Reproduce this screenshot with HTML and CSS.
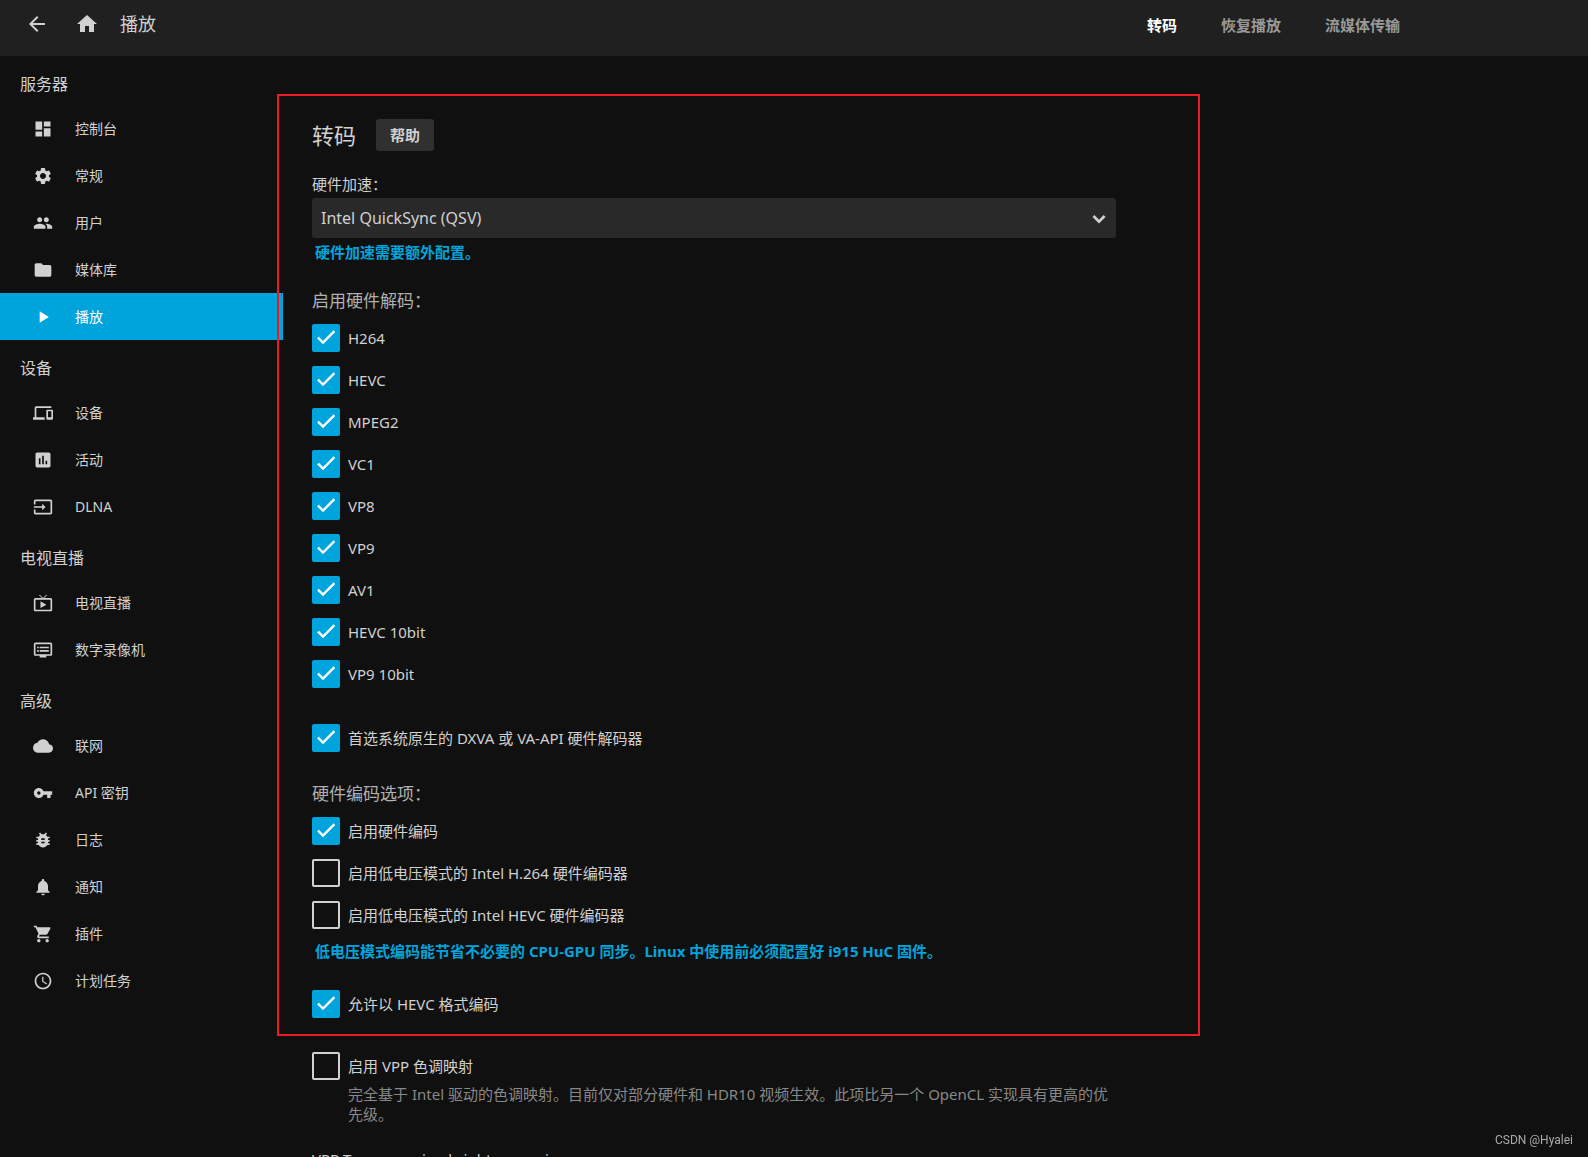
FILE: index.html
```html
<!DOCTYPE html>
<html lang="zh-CN">
<head>
<meta charset="utf-8">
<meta name="viewport" content="width=device-width, initial-scale=1">
<title>播放</title>
<link rel="stylesheet" href="styles.css">
</head>
<body>
<header class="topbar">
  <button class="icon-button" type="button" aria-label="返回"><svg viewBox="0 0 24 24"><path d="M20 11H7.83l5.59-5.59L12 4l-8 8 8 8 1.41-1.41L7.83 13H20v-2z"/></svg></button>
  <button class="icon-button" type="button" aria-label="主页"><svg viewBox="0 0 24 24"><path d="M10 20v-6h4v6h5v-8h3L12 3 2 12h3v8z"/></svg></button>
  <h1 class="page-title">播放</h1>
  <nav class="tabs" aria-label="播放设置">
    <a class="tab tab-active" href="#transcoding">转码</a>
    <a class="tab" href="#resume">恢复播放</a>
    <a class="tab" href="#streaming">流媒体传输</a>
  </nav>
</header>
<div class="layout">
  <nav class="sidebar" aria-label="控制台">
    <h2 class="nav-heading">服务器</h2>
    <ul class="nav-list">
      <li><a class="nav-link" href="#dashboard"><svg viewBox="0 0 24 24"><path d="M3 13h8V3H3v10zm0 8h8v-6H3v6zm10 0h8V11h-8v10zm0-18v6h8V3h-8z"/></svg>控制台</a></li>
      <li><a class="nav-link" href="#general"><svg viewBox="0 0 24 24"><path d="M19.14 12.94c.04-.3.06-.61.06-.94 0-.32-.02-.64-.07-.94l2.03-1.58c.18-.14.23-.41.12-.61l-1.92-3.32c-.12-.22-.37-.29-.59-.22l-2.39.96c-.5-.38-1.03-.7-1.62-.94l-.36-2.54c-.04-.24-.24-.41-.48-.41h-3.84c-.24 0-.43.17-.47.41l-.36 2.54c-.59.24-1.13.57-1.62.94l-2.39-.96c-.22-.08-.47 0-.59.22L2.74 8.87c-.12.21-.08.47.12.61l2.03 1.58c-.05.3-.09.63-.09.94s.02.64.07.94l-2.03 1.58c-.18.14-.23.41-.12.61l1.92 3.32c.12.22.37.29.59.22l2.39-.96c.5.38 1.03.7 1.62.94l.36 2.54c.05.24.24.41.48.41h3.84c.24 0 .44-.17.47-.41l.36-2.54c.59-.24 1.13-.56 1.62-.94l2.39.96c.22.08.47 0 .59-.22l1.92-3.32c.12-.22.07-.47-.12-.61l-2.01-1.58zM12 15.6c-1.98 0-3.6-1.62-3.6-3.6s1.62-3.6 3.6-3.6 3.6 1.62 3.6 3.6-1.62 3.6-3.6 3.6z"/></svg>常规</a></li>
      <li><a class="nav-link" href="#users"><svg viewBox="0 0 24 24"><path d="M16 11c1.66 0 2.99-1.34 2.99-3S17.66 5 16 5c-1.66 0-3 1.34-3 3s1.34 3 3 3zm-8 0c1.66 0 2.99-1.34 2.99-3S9.66 5 8 5C6.34 5 5 6.34 5 8s1.34 3 3 3zm0 2c-2.33 0-7 1.17-7 3.5V19h14v-2.5c0-2.33-4.67-3.5-7-3.5zm8 0c-.29 0-.62.02-.97.05 1.16.84 1.97 1.97 1.97 3.45V19h6v-2.5c0-2.33-4.67-3.5-7-3.5z"/></svg>用户</a></li>
      <li><a class="nav-link" href="#libraries"><svg viewBox="0 0 24 24"><path d="M10 4H4c-1.1 0-1.99.9-1.99 2L2 18c0 1.1.9 2 2 2h16c1.1 0 2-.9 2-2V8c0-1.1-.9-2-2-2h-8l-2-2z"/></svg>媒体库</a></li>
      <li><a class="nav-link nav-link-active" href="#playback" aria-current="page"><svg viewBox="0 0 24 24"><path d="M8 5v14l11-7z"/></svg>播放</a></li>
    </ul>
    <h2 class="nav-heading">设备</h2>
    <ul class="nav-list">
      <li><a class="nav-link" href="#devices"><svg viewBox="0 0 24 24"><path d="M4 6h18V4H4c-1.1 0-2 .9-2 2v11H0v3h14v-3H4V6zm19 2h-6c-.55 0-1 .45-1 1v10c0 .55.45 1 1 1h6c.55 0 1-.45 1-1V9c0-.55-.45-1-1-1zm-1 9h-4v-7h4v7z"/></svg>设备</a></li>
      <li><a class="nav-link" href="#activity"><svg viewBox="0 0 24 24"><path d="M19 3H5c-1.1 0-2 .9-2 2v14c0 1.1.9 2 2 2h14c1.1 0 2-.9 2-2V5c0-1.1-.9-2-2-2zM9 17H7v-7h2v7zm4 0h-2V7h2v10zm4 0h-2v-4h2v4z"/></svg>活动</a></li>
      <li><a class="nav-link" href="#dlna"><svg viewBox="0 0 24 24"><path d="M21 3.01H3c-1.1 0-2 .9-2 2V9h2V4.99h18v14.03H3V15H1v4.01c0 1.1.9 1.98 2 1.98h18c1.1 0 2-.88 2-1.98v-14c0-1.11-.9-2-2-2zM11 16l4-4-4-4v3H1v2h10v3z"/></svg>DLNA</a></li>
    </ul>
    <h2 class="nav-heading">电视直播</h2>
    <ul class="nav-list">
      <li><a class="nav-link" href="#livetv"><svg viewBox="0 0 24 24"><path d="M21 6h-7.59l3.29-3.29L16 2l-4 4-4-4-.71.71L10.59 6H3c-1.1 0-2 .89-2 2v12c0 1.1.9 2 2 2h18c1.1 0 2-.9 2-2V8c0-1.11-.9-2-2-2zm0 14H3V8h18v12zM9 10v8l7-4z"/></svg>电视直播</a></li>
      <li><a class="nav-link" href="#dvr"><svg viewBox="0 0 24 24"><path d="M21 3H3c-1.1 0-2 .9-2 2v12c0 1.1.9 2 2 2h5v2h8v-2h5c1.1 0 1.99-.9 1.99-2L23 5c0-1.1-.9-2-2-2zm0 14H3V5h18v12zm-2-9H8v2h11V8zm0 4H8v2h11v-2zM7 8H5v2h2V8zm0 4H5v2h2v-2z"/></svg>数字录像机</a></li>
    </ul>
    <h2 class="nav-heading">高级</h2>
    <ul class="nav-list">
      <li><a class="nav-link" href="#network"><svg viewBox="0 0 24 24"><path d="M19.35 10.04C18.67 6.59 15.64 4 12 4 9.11 4 6.6 5.64 5.35 8.04 2.34 8.36 0 10.91 0 14c0 3.31 2.69 6 6 6h13c2.76 0 5-2.24 5-5 0-2.64-2.05-4.78-4.65-4.96z"/></svg>联网</a></li>
      <li><a class="nav-link" href="#keys"><svg viewBox="0 0 24 24"><path d="M12.65 10C11.83 7.67 9.61 6 7 6c-3.31 0-6 2.69-6 6s2.69 6 6 6c2.61 0 4.83-1.67 5.65-4H17v4h4v-4h2v-4H12.65zM7 14c-1.1 0-2-.9-2-2s.9-2 2-2 2 .9 2 2-.9 2-2 2z"/></svg>API 密钥</a></li>
      <li><a class="nav-link" href="#logs"><svg viewBox="0 0 24 24"><path d="M20 8h-2.81c-.45-.78-1.07-1.45-1.82-1.96L17 4.41 15.59 3l-2.17 2.17C12.96 5.06 12.49 5 12 5c-.49 0-.96.06-1.41.17L8.41 3 7 4.41l1.62 1.63C7.88 6.55 7.26 7.22 6.81 8H4v2h2.09c-.05.33-.09.66-.09 1v1H4v2h2v1c0 .34.04.67.09 1H4v2h2.81c1.04 1.79 2.97 3 5.19 3s4.15-1.21 5.19-3H20v-2h-2.09c.05-.33.09-.66.09-1v-1h2v-2h-2v-1c0-.34-.04-.67-.09-1H20V8zm-6 8h-4v-2h4v2zm0-4h-4v-2h4v2z"/></svg>日志</a></li>
      <li><a class="nav-link" href="#notifications"><svg viewBox="0 0 24 24"><path d="M12 22c1.1 0 2-.9 2-2h-4c0 1.1.89 2 2 2zm6-6v-5c0-3.07-1.64-5.64-4.5-6.32V4c0-.83-.67-1.5-1.5-1.5s-1.5.67-1.5 1.5v.68C7.63 5.36 6 7.92 6 11v5l-2 2v1h16v-1l-2-2z"/></svg>通知</a></li>
      <li><a class="nav-link" href="#plugins"><svg viewBox="0 0 24 24"><path d="M7 18c-1.1 0-1.99.9-1.99 2S5.9 22 7 22s2-.9 2-2-.9-2-2-2zM1 2v2h2l3.6 7.59-1.35 2.45c-.16.28-.25.61-.25.96 0 1.1.9 2 2 2h12v-2H7.42c-.14 0-.25-.11-.25-.25l.03-.12.9-1.63h7.45c.75 0 1.41-.41 1.75-1.03l3.58-6.49c.08-.14.12-.31.12-.48 0-.55-.45-1-1-1H5.21l-.94-2H1zm16 16c-1.1 0-1.99.9-1.99 2s.89 2 1.99 2 2-.9 2-2-.9-2-2-2z"/></svg>插件</a></li>
      <li><a class="nav-link" href="#tasks"><svg viewBox="0 0 24 24"><path d="M11.99 2C6.47 2 2 6.48 2 12s4.47 10 9.99 10C17.52 22 22 17.52 22 12S17.52 2 11.99 2zM12 20c-4.42 0-8-3.58-8-8s3.58-8 8-8 8 3.58 8 8-3.58 8-8 8zm.5-13H11v6l5.25 3.15.75-1.23-4.5-2.67z"/></svg>计划任务</a></li>
    </ul>
  </nav>
  <main class="content">
    <form class="settings">
      <div class="highlight">
        <div class="title-row">
          <h2 class="section-title">转码</h2>
          <button class="help-button" type="button">帮助</button>
        </div>
        <label class="field-label" for="accel">硬件加速：</label>
        <div class="select-wrap">
          <select class="select" id="accel"><option>Intel QuickSync (QSV)</option></select>
          <svg class="select-arrow" viewBox="0 0 24 24"><path d="M7.41 9.09 12 13.67l4.59-4.58L18.5 11 12 17.5 5.5 11z"/></svg>
        </div>
        <a class="hint hint-select" href="#accel-help">硬件加速需要额外配置。</a>

        <fieldset class="group">
          <legend class="group-title">启用硬件解码：</legend>
          <div class="checks">
            <label class="check"><input type="checkbox" checked>H264</label>
            <label class="check"><input type="checkbox" checked>HEVC</label>
            <label class="check"><input type="checkbox" checked>MPEG2</label>
            <label class="check"><input type="checkbox" checked>VC1</label>
            <label class="check"><input type="checkbox" checked>VP8</label>
            <label class="check"><input type="checkbox" checked>VP9</label>
            <label class="check"><input type="checkbox" checked>AV1</label>
            <label class="check"><input type="checkbox" checked>HEVC 10bit</label>
            <label class="check"><input type="checkbox" checked>VP9 10bit</label>
          </div>
        </fieldset>
        <label class="check check-native"><input type="checkbox" checked>首选系统原生的 DXVA 或 VA-API 硬件解码器</label>

        <fieldset class="group">
          <legend class="group-title">硬件编码选项：</legend>
          <div class="checks">
            <label class="check"><input type="checkbox" checked>启用硬件编码</label>
            <label class="check"><input type="checkbox">启用低电压模式的 Intel H.264 硬件编码器</label>
            <label class="check"><input type="checkbox">启用低电压模式的 Intel HEVC 硬件编码器</label>
          </div>
        </fieldset>
        <a class="hint hint-encoder" href="#low-power-help">低电压模式编码能节省不必要的 CPU-GPU 同步。Linux 中使用前必须配置好 i915 HuC 固件。</a>
        <label class="check check-hevc"><input type="checkbox" checked>允许以 HEVC 格式编码</label>
      </div>
      <label class="check check-vpp"><input type="checkbox" aria-describedby="vpp-text">启用 VPP 色调映射</label>
      <p class="description" id="vpp-text">完全基于 Intel 驱动的色调映射。目前仅对部分硬件和 HDR10 视频生效。此项比另一个 OpenCL 实现具有更高的优先级。</p>
      <label class="field-label field-label-gain" for="gain">VPP Tone mapping brightness gain:</label>
      <input class="text-input" id="gain" type="number" value="0">
    </form>
  </main>
</div>
<div class="watermark">CSDN @Hyalei</div>
</body>
</html>
```

FILE: styles.css
```css
*,
*::before,
*::after {
  box-sizing: border-box;
}

body {
  display: flex;
  flex-direction: column;
  height: 100vh;
  margin: 0;
  background: #101010;
  color: #d1d1d1;
  font-family: "Noto Sans", "Noto Sans CJK SC", sans-serif;
  font-size: 15px;
  line-height: 20px;
}

svg {
  display: block;
  fill: currentColor;
}

a {
  color: inherit;
  text-decoration: none;
}

button {
  border: 0;
  color: inherit;
  font: inherit;
}

/* Top bar */

.topbar {
  display: flex;
  flex: none;
  align-items: center;
  height: 56px;
  padding: 0 166px 8px 13px;
  background: #202020;
}

.icon-button {
  margin-right: 2px;
  padding: 11px 12px;
  background: none;
}

.icon-button svg {
  width: 24px;
  height: 24px;
}

.page-title {
  margin: 0 auto 0 7px;
  font-size: 18px;
  font-weight: 400;
  line-height: 24px;
}

.tabs {
  display: flex;
}

.tab {
  padding: 2px 22px 0;
  color: #999;
  font-weight: 700;
}

.tab-active {
  color: #fff;
}

/* Sidebar */

.layout {
  display: flex;
  flex: 1;
  min-height: 0;
  overflow: auto;
  scrollbar-width: none;
}

.sidebar {
  flex: none;
  width: 283px;
}

.nav-heading {
  margin: 0;
  padding: 16px 20px 9px;
  font-size: 16px;
  font-weight: 400;
  line-height: 24px;
}

.nav-list {
  margin: 0;
  padding: 0;
  list-style: none;
}

.nav-link {
  display: flex;
  align-items: center;
  gap: 22px;
  height: 47px;
  padding-left: 33px;
  font-size: 14px;
}

.nav-link svg {
  width: 20px;
  height: 20px;
}

.nav-link-active {
  background: #00a4dc;
  color: #fff;
}

/* Settings form */

.content {
  flex: 1;
  min-width: 0;
  padding: 63px 29px 0;
}

.settings {
  max-width: 804px;
}

/* Red outline that marks the transcoding options */

.highlight {
  position: relative;
}

.highlight::after {
  position: absolute;
  inset: -25px -84px -18px -35px;
  border: 2px solid #ed1c24;
  content: "";
  pointer-events: none;
}

.title-row {
  display: flex;
  align-items: center;
  gap: 20px;
  margin-bottom: 23px;
}

.section-title {
  margin: 0;
  font-size: 22px;
  font-weight: 400;
  line-height: 32px;
}

.help-button {
  height: 32px;
  padding: 0 14px;
  border-radius: 3px;
  background: #303030;
  font-weight: 700;
}

.field-label {
  display: block;
}

.select-wrap {
  display: grid;
  margin-top: 4px;
}

.select {
  grid-area: 1 / 1;
  width: 100%;
  height: 40px;
  padding: 0 40px 0 9px;
  appearance: none;
  border: 0;
  border-radius: 3px;
  background: #292929;
  color: inherit;
  font: inherit;
  font-size: 16px;
}

.select-arrow {
  grid-area: 1 / 1;
  place-self: center end;
  width: 24px;
  height: 24px;
  margin-right: 5px;
  pointer-events: none;
}

.hint {
  display: block;
  padding-left: 3px;
  color: #00a4dc;
  font-weight: 700;
}

.hint-select {
  margin-top: 4px;
}

.hint-encoder {
  margin-top: 12px;
}

.group {
  min-width: 0;
  margin: 27px 0 0;
  padding: 0;
  border: 0;
}

.group-title {
  padding: 0;
  color: #b0b0b0;
  font-size: 17px;
  line-height: 24px;
}

.checks {
  display: flex;
  flex-direction: column;
  gap: 14px;
  padding-top: 11px;
}

.check {
  display: flex;
  align-items: center;
  gap: 8px;
}

.check input {
  flex: none;
  width: 28px;
  height: 28px;
  margin: 0;
  appearance: none;
  border: 2px solid #d1d1d1;
  border-radius: 2px;
}

.check input:checked {
  border: 0;
  background: #00a4dc url("data:image/svg+xml,%3Csvg xmlns='http://www.w3.org/2000/svg' viewBox='0 0 24 24'%3E%3Cpath fill='white' stroke='white' stroke-width='.5' d='M9 16.17 4.83 12l-1.42 1.41L9 19 21 7l-1.41-1.41z'/%3E%3C/svg%3E") 2px 1px / 24px 24px no-repeat;
}

.check-native {
  margin: 36px 0 30px;
}

.check-hevc {
  margin-top: 29px;
}

.check-vpp {
  margin-top: 34px;
}

.description {
  margin: 4px 0 0;
  padding-left: 36px;
  color: #888;
}

.field-label-gain {
  margin-top: 25px;
}

.text-input {
  width: 100%;
  height: 40px;
  margin-top: 4px;
  padding: 0 10px;
  border: 0;
  border-radius: 3px;
  background: #292929;
  color: inherit;
  font: inherit;
}

.watermark {
  position: fixed;
  right: 15px;
  bottom: 8px;
  color: #aaa;
  font-family: Roboto, sans-serif;
  font-size: 12px;
  line-height: 18px;
}
```
